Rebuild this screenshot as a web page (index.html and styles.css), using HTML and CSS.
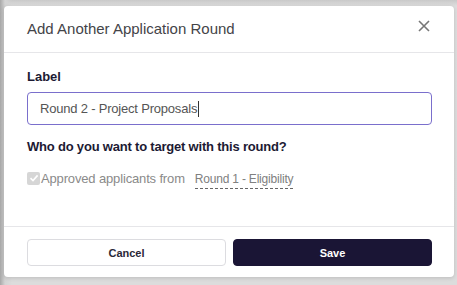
FILE: index.html
```html
<!DOCTYPE html>
<html>
<head>
<meta charset="utf-8">
<link rel="stylesheet" href="styles.css">
</head>
<body>
<div class="backdrop">
  <div class="modal">
    <div class="modal-header">
      <h1 class="title">Add Another Application Round</h1>
      <span class="close" aria-label="Close">
        <svg width="12" height="12" viewBox="0 0 12 12"><path d="M1 1L11 11M11 1L1 11" stroke="#777" stroke-width="1.6" fill="none"/></svg>
      </span>
    </div>
    <div class="modal-body">
      <div class="field-label">Label</div>
      <div class="input"><span>Round 2 - Project Proposals</span><span class="caret"></span></div>
      <div class="question">Who do you want to target with this round?</div>
      <div class="check-row">
        <span class="checkbox">
          <svg width="10" height="10" viewBox="0 0 10 10"><path d="M1.5 5.2L4 7.6L8.6 2.4" stroke="#fff" stroke-width="1.6" fill="none"/></svg>
        </span>
        <span class="check-text">Approved applicants from</span>
        <span class="select">Round 1 - Eligibility</span>
      </div>
    </div>
    <div class="modal-footer">
      <button class="btn btn-cancel">Cancel</button>
      <button class="btn btn-save">Save</button>
    </div>
  </div>
</div>
</body>
</html>
```
FILE: styles.css
```css
html, body {
  margin: 0;
  padding: 0;
}
body {
  width: 457px;
  height: 285px;
  overflow: hidden;
  font-family: "Liberation Sans", Arial, sans-serif;
  background:
    linear-gradient(90deg, #a8a8a8 0px, #d4d4d4 5px, rgba(220,220,220,0) 12px),
    linear-gradient(180deg, #c9c9c9 0px, #dedede 6px, #dcdcdc 100%);
}
.backdrop {
  padding: 6px 3px 0 4px;
}
.modal {
  width: 450px;
  height: 271px;
  background: #fff;
  border-radius: 4px;
  box-shadow: 0 1px 4px rgba(0,0,0,0.15);
  display: flex;
  flex-direction: column;
}
.modal-header {
  border-bottom: 1px solid #e6e6e9;
  display: flex;
  align-items: center;
  justify-content: space-between;
  padding: 0 24px 2px 23px;
  box-sizing: border-box;
  height: 47px;
}
.title {
  margin: 0;
  font-size: 15px;
  font-weight: normal;
  color: #444448;
}
.close {
  display: flex;
  margin-top: -4px;
}
.modal-body {
  padding: 16px 22px 0 23px;
  flex: 1;
}
.field-label {
  font-size: 13px;
  font-weight: bold;
  color: #1c1a33;
  line-height: 15px;
}
.input {
  margin-top: 8px;
  height: 33px;
  box-sizing: border-box;
  border: 1px solid #7a6fcc;
  border-radius: 4px;
  padding: 0 12px;
  display: flex;
  align-items: center;
  font-size: 13px;
  letter-spacing: -0.2px;
  color: #555;
}
.caret {
  width: 1px;
  height: 16px;
  background: #333;
  margin-left: 1px;
}
.question {
  margin-top: 14px;
  font-size: 13px;
  letter-spacing: -0.2px;
  font-weight: bold;
  color: #1c1a33;
  line-height: 16px;
}
.check-row {
  margin-top: 12px;
  display: flex;
  align-items: center;
  font-size: 13px;
  letter-spacing: -0.15px;
  color: #8a8a8a;
}
.checkbox {
  width: 13px;
  height: 13px;
  border-radius: 2px;
  background: #d6d6d6;
  display: flex;
  align-items: center;
  justify-content: center;
  margin-right: 1px;
}
.select {
  margin-left: 10px;
  font-size: 12px;
  letter-spacing: -0.2px;
  color: #808080;
  border-bottom: 1px dashed #666;
  padding-bottom: 2px;
  margin-top: 5px;
}
.modal-footer {
  border-top: 1px solid #e6e6e9;
  padding: 12px 22px 11px 23px;
  display: flex;
  gap: 7px;
}
.btn {
  flex: 1;
  height: 27px;
  border-radius: 4px;
  font-family: "Liberation Sans", Arial, sans-serif;
  font-size: 11px;
  font-weight: bold;
  cursor: pointer;
}
.btn-cancel {
  background: #fff;
  border: 1px solid #dcdce0;
  color: #2a2838;
}
.btn-save {
  background: #1a1535;
  border: 1px solid #1a1535;
  color: #fff;
}
```
